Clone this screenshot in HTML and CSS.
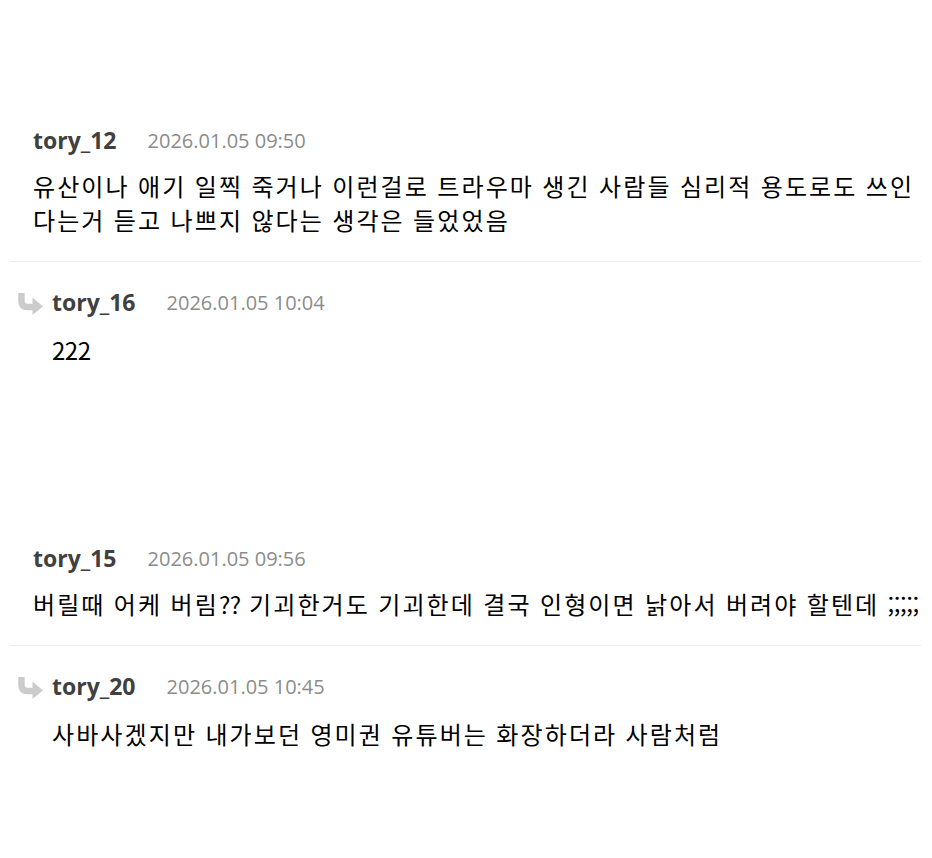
FILE: index.html
```html
<!DOCTYPE html>
<html lang="ko">
<head>
<meta charset="utf-8">
<title>댓글</title>
<link rel="stylesheet" href="styles.css">
</head>
<body>
<main class="page">
  <section class="group">
    <article class="comment">
      <div class="meta"><span class="name">tory_12</span><span class="date">2026.01.05 09:50</span></div>
      <p class="text">유산이나 애기 일찍 죽거나 이런걸로 트라우마 생긴 사람들 심리적 용도로도 쓰인다는거 듣고 나쁘지 않다는 생각은 들었었음</p>
    </article>
    <article class="reply">
      <svg class="reply-icon" width="27" height="23" viewBox="0 0 27 23" aria-hidden="true">
        <path d="M4.5 1 V9 Q4.5 15 10.5 15 H17" fill="none" stroke="#cccccc" stroke-width="6.5"/>
        <path d="M15.5 5.5 L26 14.5 L15.5 23 Z" fill="#cccccc"/>
      </svg>
      <div class="reply-body">
        <div class="meta"><span class="name">tory_16</span><span class="date">2026.01.05 10:04</span></div>
        <p class="text"><span class="ascii">222</span></p>
      </div>
    </article>
  </section>
  <section class="group">
    <article class="comment">
      <div class="meta"><span class="name">tory_15</span><span class="date">2026.01.05 09:56</span></div>
      <p class="text">버릴때 어케 버림<span class="ascii">??</span> 기괴한거도 기괴한데 결국 인형이면 낡아서 버려야 할텐데 <span class="ascii">;;;;;</span></p>
    </article>
    <article class="reply">
      <svg class="reply-icon" width="27" height="23" viewBox="0 0 27 23" aria-hidden="true">
        <path d="M4.5 1 V9 Q4.5 15 10.5 15 H17" fill="none" stroke="#cccccc" stroke-width="6.5"/>
        <path d="M15.5 5.5 L26 14.5 L15.5 23 Z" fill="#cccccc"/>
      </svg>
      <div class="reply-body">
        <div class="meta"><span class="name">tory_20</span><span class="date">2026.01.05 10:45</span></div>
        <p class="text">사바사겠지만 내가보던 영미권 유튜버는 화장하더라 사람처럼</p>
      </div>
    </article>
  </section>
</main>
</body>
</html>
```

FILE: styles.css
```css
html, body {
  margin: 0;
  padding: 0;
  background: #ffffff;
}

.page {
  width: 911px;
  margin-left: 10px;
  padding-top: 125px;
  display: flex;
  flex-direction: column;
  gap: 176px;
}

.group {
  display: flex;
  flex-direction: column;
}

.comment {
  padding: 0 0 24px 23px;
  border-bottom: 1px solid #ececec;
}

.meta {
  display: flex;
  align-items: center;
  gap: 31px;
  height: 30px;
}

.name {
  font-family: "Open Sans", "Noto Sans CJK KR", sans-serif;
  font-weight: 700;
  font-size: 23px;
  color: #404040;
}

.date {
  font-family: "Open Sans", "Noto Sans CJK KR", sans-serif;
  font-size: 20px;
  color: #8c8c8c;
}

.text {
  margin: 14px 0 0;
  font-family: "Noto Sans CJK KR", sans-serif;
  font-size: 24px;
  line-height: 34px;
  letter-spacing: 2.1px;
  word-spacing: -0.5px;
  color: #000000;
}

.ascii {
  letter-spacing: -0.5px;
}

.reply {
  display: flex;
  align-items: flex-start;
  padding: 25px 0 0 7px;
}

.reply-icon {
  flex: none;
  margin-top: 5px;
}

.reply-body {
  margin-left: 8px;
}

.reply .text {
  margin-top: 16px;
}
```
